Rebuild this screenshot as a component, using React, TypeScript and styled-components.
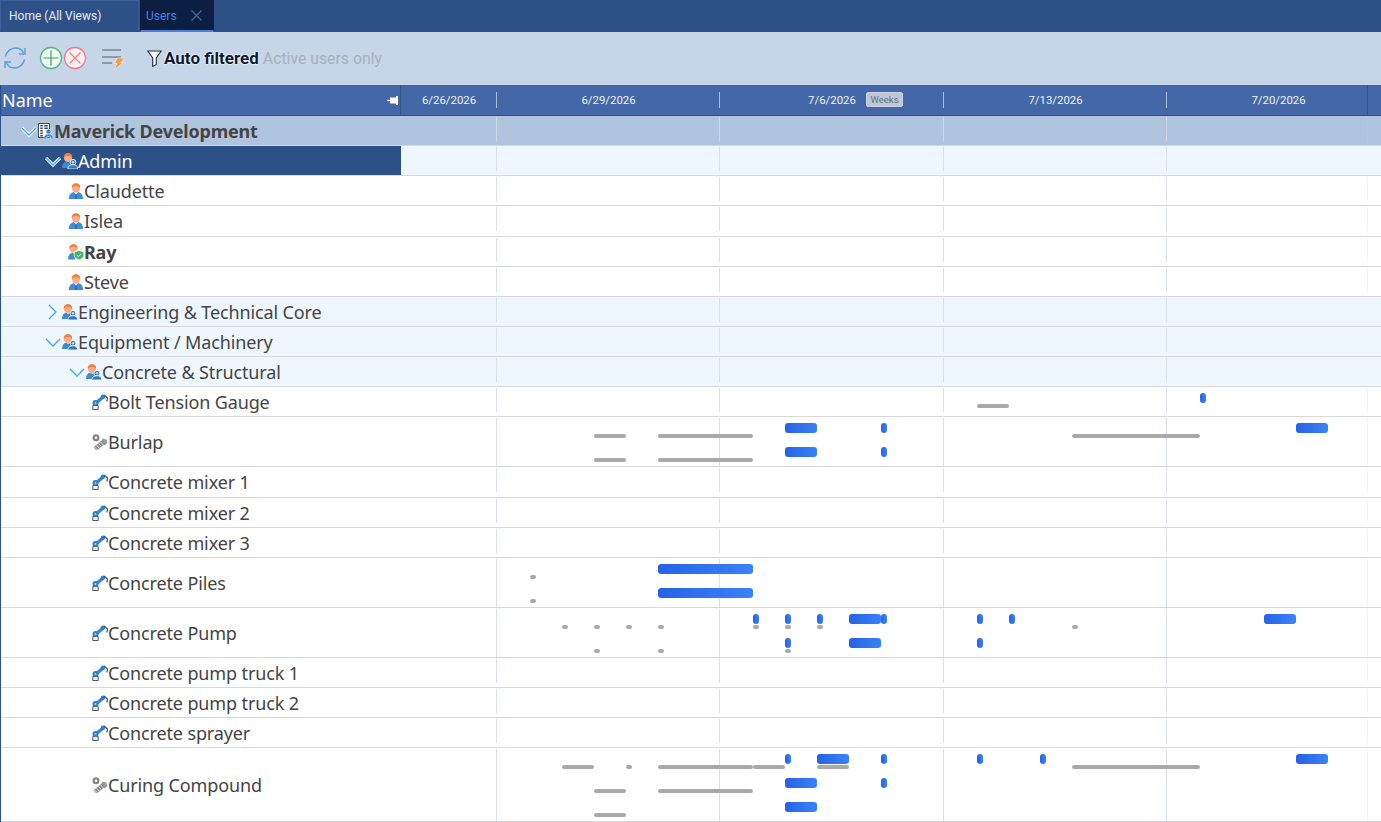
import React from 'react';
import styled, { createGlobalStyle } from 'styled-components';

const Global = createGlobalStyle`
  html, body { margin: 0; padding: 0; height: 100%; overflow: hidden; background: #fff; }
  #root { height: 100%; }
`;

const Page = styled.div`
  height: 822px; display: flex; flex-direction: column; overflow: hidden;
  font-family: "Noto Sans", "Open Sans", sans-serif; color: #444;
`;

/* ---------- tabs ---------- */
const TabBar = styled.div`
  height: 32px; flex: none; display: flex; gap: 1px; background: #2d5087; box-sizing: border-box;
`;
const Tab = styled.div<{ $active?: boolean }>`
  width: ${p => (p.$active ? '74px' : '139px')}; box-sizing: border-box; display: flex; align-items: center;
  padding-left: ${p => (p.$active ? '5px' : '8px')}; gap: 14px; font: 12px Roboto, sans-serif;
  background: ${p => (p.$active ? '#0c1f42' : '#2d5087')};
  color: ${p => (p.$active ? '#4b7fe6' : '#e6ecf5')};
  border: 1px solid ${p => (p.$active ? '#0c1f42' : '#3b5f98')};
  border-bottom: 2px solid ${p => (p.$active ? '#4d82dc' : '#2d5087')};
`;

/* ---------- toolbar ---------- */
const Toolbar = styled.div`
  height: 53px; flex: none; display: flex; align-items: center; background: #c6d5e8; padding-left: 3px;
  box-sizing: border-box; padding-bottom: 1px;
`;
const ToolIcon = styled.svg<{ $after?: number }>`
  width: 24px; height: 24px; flex: none; margin-right: ${p => p.$after ?? 0}px;
`;
const FilterBold = styled.span`
  font: 700 17px Roboto, sans-serif; color: #0c1a33; margin-left: 2px;
  text-shadow: 0 0 2px #fff, 0 0 2px #fff, 0 0 1px #fff;
`;
const FilterNote = styled.span`
  font: 15.8px Roboto, sans-serif; color: #a9b1bc; margin-left: 4px;
`;

/* ---------- header ---------- */
const Header = styled.div`
  height: 31px; flex: none; display: flex; background: #4467a7; border-bottom: 1px solid #2d5087;
  border-left: 1px solid #2d5087; box-sizing: border-box; color: #fff;
`;
const NameHead = styled.div`
  width: 400px; flex: none; box-sizing: border-box; border-right: 1px solid #34568f; display: flex;
  align-items: center; justify-content: space-between; padding: 0 1px 0 1px; font-size: 18px;
`;
const DateHead = styled.div<{ $w: number }>`
  width: ${p => p.$w}px; flex: none; position: relative; display: flex; align-items: center; justify-content: center;
  font: 11.4px Roboto, sans-serif; color: #eef2f8; box-sizing: border-box;
  &::after { content: ''; position: absolute; right: 0; top: 7px; bottom: 7px; width: 1px; background: #a9bcd8; }
`;
const LastHead = styled(DateHead)`
  padding-left: 22px;
  &::after { top: 0; bottom: 0; background: #34568f; }
`;
const WeeksBadge = styled.span`
  position: absolute; left: 146px; top: 7px; width: 37px; height: 15px; border-radius: 2px; background: #bcc8da;
  color: #667080; font: 9.5px Roboto, sans-serif; display: flex; align-items: center; justify-content: center;
  border: 1px solid #c8d2e0; box-sizing: border-box;
`;

/* ---------- rows ---------- */
const Body = styled.div`
  flex: 1; min-height: 0; overflow: hidden; border-left: 1px solid #2d5087;
`;
type Kind = 'org' | 'selected' | 'group' | 'leaf';
const Row = styled.div<{ $h: number; $kind: Kind }>`
  height: ${p => p.$h}px; box-sizing: border-box; display: flex; border-bottom: 1px solid #d8d8d8;
  background: ${p => (p.$kind === 'org' ? '#b0c4dd' : p.$kind === 'leaf' ? '#fff' : '#eef7ff')};
`;
const TreeCell = styled.div<{ $indent: number; $kind: Kind; $bold?: boolean }>`
  width: 400px; flex: none; box-sizing: border-box; display: flex; align-items: center;
  padding-left: ${p => p.$indent - 1}px; white-space: nowrap;
  font-size: 18px; letter-spacing: ${p => (p.$bold ? '-0.2px' : '-0.13px')}; line-height: 24px;
  font-weight: ${p => (p.$bold ? 700 : 400)};
  background: ${p => (p.$kind === 'selected' ? '#2d5087' : 'transparent')};
  color: ${p => (p.$kind === 'selected' ? '#fff' : '#444')};
`;
const Timeline = styled.div`
  flex: 1; position: relative; overflow: hidden;
`;
const GridLine = styled.i<{ $tall: boolean; $faint?: boolean }>`
  position: absolute; top: 1px; width: 1px;
  height: ${p => (p.$tall ? 'calc(100% - 1px)' : '24px')};
  background: ${p => (p.$faint ? '#f6f6f6' : '#d5e1ee')};
`;
const OrgGridLine = styled(GridLine)`
  background: ${p => (p.$faint ? '#b6c8df' : '#cbd9ea')};
`;
const Bar = styled.b<{ $gray: boolean }>`
  position: absolute;
  height: ${p => (p.$gray ? 4 : 10)}px;
  border-radius: ${p => (p.$gray ? 2 : 3)}px;
  background: ${p => (p.$gray ? '#a9a9a9' : 'linear-gradient(90deg, #2563e6, #3b82f6)')};
`;
const Chevron = styled.svg`
  width: 18px; height: 16px; flex: none; overflow: visible;
`;
const RowIcon = styled.svg`
  width: 16px; height: 16px; flex: none;
`;

/* ---------- icons ---------- */
const Person = () => (
  <RowIcon viewBox="0 0 16 16">
    <path d="M.8 16c0-3.800 2-6.200 4.700-7L8 11l2.500-2c2.700.8 4.700 3.200 4.700 7z" fill="#3f8cd6" />
    <path d="M5.800 8.800 8 11.500l2.200-2.700L8 9.600z" fill="#cfe4f6" />
    <path d="M7.300 11.500h1.400L9 16H7z" fill="#2a6cb0" />
    <ellipse cx="8" cy="5" rx="4" ry="4.500" fill="#f7ad86" />
    <path d="M3.900 5.500C3.300 2 5.400.3 8 .3s4.700 1.700 4.100 5.200c-.6-1.800-1.900-2.500-4.100-2.500s-3.500.7-4.100 2.500z" fill="#ec8240" />
  </RowIcon>
);
const Group = () => (
  <RowIcon viewBox="0 0 16 16">
    <path d="M0 15c0-3.500 1.600-5.800 4.200-6.500L6 10l2-1 1 6z" fill="#3f8cd6" />
    <ellipse cx="6" cy="4.700" rx="4.100" ry="4.400" fill="#f7ad86" />
    <path d="M1.900 5.200C1.300 1.800 3.400.2 6 .2s4.700 1.600 4.100 5c-.6-1.700-1.900-2.300-4.100-2.300S2.500 3.500 1.900 5.200z" fill="#ec8240" />
    <circle cx="11" cy="9.300" r="2.900" fill="#2f77bf" stroke="#fff" strokeWidth=".9" />
    <path d="M5.800 16c0-2.900 2.300-4.300 5.200-4.300s4.800 1.400 4.800 4.300z" fill="#2f77bf" stroke="#fff" strokeWidth=".8" />
    <circle cx="11" cy="9.300" r="1.300" fill="#bcdcf5" />
  </RowIcon>
);
const Admin = () => (
  <RowIcon viewBox="0 0 16 16">
    <path d="M0 15.500c0-3.500 1.600-6 4.200-6.700l3 1.200v5.500z" fill="#3f8cd6" />
    <ellipse cx="5.500" cy="4.500" rx="4" ry="4.300" fill="#f7ad86" />
    <path d="M1.500 5C.9 1.800 3 .2 5.500.2s4.600 1.600 4 4.800c-.6-1.700-1.800-2.200-4-2.200S2.100 3.300 1.500 5z" fill="#ec8240" />
    <path d="M11 6.300l4.800 1.600v3.500c0 2.200-2.200 3.700-4.800 4.600-2.600-.9-4.800-2.400-4.800-4.600V7.900z" fill="#3dbb6b" stroke="#fff" strokeWidth=".8" />
    <path d="M8.800 11l1.600 1.600L13.200 9.800" fill="none" stroke="#d8f5e2" strokeWidth="1" />
  </RowIcon>
);
const Org = () => (
  <RowIcon viewBox="0 0 16 16">
    <path d="M.5.500h11v14H.5z" fill="#fff" stroke="#3c4a5c" />
    <path d="M2.300 2.800h2.500M6.300 2.800h3.500M2.300 5.300h2.500M6.300 5.300h3.500M2.300 7.800h2.500M2.300 10.300h2.500M2.300 12.800h2.500" stroke="#3c4a5c" strokeWidth="1.400" />
    <circle cx="10.500" cy="8.700" r="2.600" fill="#3a86cf" stroke="#fff" strokeWidth=".7" />
    <path d="M5.800 16c0-3.200 1.800-5 4.700-5s4.900 1.800 4.900 5h-2.300l-.6-2.200H9l-.6 2.200z" fill="#3a86cf" stroke="#fff" strokeWidth=".5" />
  </RowIcon>
);
const Robot = () => (
  <RowIcon viewBox="0 0 16 16">
    <path d="M.8 11.500h5.400v4H.8z" fill="#f4f4f4" stroke="#4d5560" />
    <path d="M3.500 9.500l7.500-6.500" stroke="#3686d6" strokeWidth="3.400" />
    <circle cx="3.500" cy="9" r="3" fill="#2f7fd0" />
    <circle cx="3.500" cy="9" r="1" fill="#a9d3f3" />
    <circle cx="11" cy="2.800" r="2.200" fill="#2f7fd0" />
    <path d="M12 1l3.500 3-.6 3.500" stroke="#4d5560" strokeWidth="1.300" fill="none" />
  </RowIcon>
);
const Tool = () => (
  <RowIcon viewBox="0 0 16 16">
    <circle cx="4" cy="3.800" r="3.500" fill="#858585" />
    <circle cx="4" cy="3.800" r="1.300" fill="#fff" />
    <path d="M10.500 4.500l4 1 1 3.500-3 2.500-3.500-3z" fill="#9a9a9a" />
    <path d="M11.500 8 3 15" stroke="#8a8a8a" strokeWidth="4.600" />
    <path d="M8.500 7.800l2.600 3M6.500 9.400l2.600 3M4.500 11l2.600 3M2.500 12.700l2.600 3" stroke="#f3f3f3" strokeWidth=".9" />
  </RowIcon>
);
const Down = ({ glow }: { glow?: boolean }) => (
  <Chevron viewBox="0 0 18 16">
    {glow && <path d="M2 5l7 7 7-7" fill="none" stroke="#fff" strokeWidth="3.200" />}
    <path d="M2 5l7 7 7-7" fill="none" stroke="#3aa9ec" strokeWidth="1.300" />
  </Chevron>
);
const Right = () => (
  <Chevron viewBox="0 0 18 16">
    <path d="M5 1l7 7-7 7" fill="none" stroke="#3aa9ec" strokeWidth="1.300" />
  </Chevron>
);
const PinIcon = () => (
  <svg width="12" height="11" viewBox="0 0 12 11">
    <path d="M0 5.500h4" stroke="#fff" strokeWidth="1.300" />
    <path d="M3 2.500h6V1h2v9H9V8.500H3z" fill="#fff" />
  </svg>
);
const RefreshIcon = () => (
  <ToolIcon viewBox="0 0 24 24" $after={12}>
    <path d="M2.500 10.500C3.500 5.500 7.500 2 12.500 2c4 0 6.800 2 8.300 5.500M21.500 13.500c-1 5-5 8.500-10 8.500-4 0-6.800-2-8.300-5.500" fill="none" stroke="#5a9fd8" strokeWidth="1.400" />
    <path d="M22 2v6h-6M2 22v-6h6" fill="none" stroke="#5a9fd8" strokeWidth="1.400" />
  </ToolIcon>
);
const AddIcon = () => (
  <ToolIcon viewBox="0 0 24 24">
    <circle cx="12" cy="12" r="10.500" fill="#f2f8f4" stroke="#4cbb7a" strokeWidth="1.300" />
    <path d="M12 4.500v15M4.500 12h15" stroke="#2fa55f" strokeWidth="1.200" />
  </ToolIcon>
);
const RemoveIcon = () => (
  <ToolIcon viewBox="0 0 24 24" $after={14}>
    <circle cx="12" cy="12" r="10.500" fill="#fbf0f1" stroke="#ee7d83" strokeWidth="1.300" />
    <path d="M6.500 6.500l11 11M17.500 6.500l-11 11" stroke="#ee7d83" strokeWidth="1.200" />
  </ToolIcon>
);
const RulesIcon = () => (
  <ToolIcon viewBox="0 0 24 24" $after={22}>
    <path d="M1 4h19M1 11h19M1 17h10" stroke="#7f8690" strokeWidth="1.500" />
    <path d="M16.500 12h7L20 16.500h2.500L13 24l3-6.500h-3z" fill="#f0a04a" stroke="#fff" strokeWidth=".5" />
  </ToolIcon>
);
const FunnelIcon = () => (
  <svg width="15" height="17" viewBox="0 0 15 17" style={{ flex: 'none' }}>
    <path d="M.8 1h13.400L9.300 8v6.500l-3.600 2V8z" fill="#f4f7fb" stroke="#2a2f38" strokeWidth="1.100" />
  </svg>
);

/* ---------- data ---------- */
type B = [lane: number, gray: 0 | 1, x: number, x2: number];
type RowData = {
  name: string; h: number; kind: Kind; indent: number; icon: React.FC;
  arrow?: 'down' | 'right' | 'glow'; bold?: boolean; bars?: B[];
};
const blue = (lane: number, x: number, x2: number): B => [lane, 0, x, x2];
const gray = (lane: number, x: number, x2: number): B => [lane, 1, x, x2];

const rows: RowData[] = [
  { name: 'Maverick Development', h: 30, kind: 'org', indent: 20, icon: Org, arrow: 'glow', bold: true },
  { name: 'Admin', h: 30, kind: 'selected', indent: 44, icon: Group, arrow: 'glow' },
  { name: 'Claudette', h: 30, kind: 'leaf', indent: 68, icon: Person },
  { name: 'Islea', h: 31, kind: 'leaf', indent: 68, icon: Person },
  { name: 'Ray', h: 30, kind: 'leaf', indent: 68, icon: Admin, bold: true },
  { name: 'Steve', h: 30, kind: 'leaf', indent: 68, icon: Person },
  { name: 'Engineering & Technical Core', h: 30, kind: 'group', indent: 44, icon: Group, arrow: 'right' },
  { name: 'Equipment / Machinery', h: 30, kind: 'group', indent: 44, icon: Group, arrow: 'down' },
  { name: 'Concrete & Structural', h: 30, kind: 'group', indent: 68, icon: Group, arrow: 'down' },
  { name: 'Bolt Tension Gauge', h: 30, kind: 'leaf', indent: 92, icon: Robot, bars: [gray(0, 977, 1009), blue(0, 1200, 1206)] },
  {
    name: 'Burlap', h: 50, kind: 'leaf', indent: 92, icon: Tool,
    bars: [
      gray(0, 594, 626), gray(0, 658, 753), blue(0, 785, 817), blue(0, 881, 887), gray(0, 1072, 1200), blue(0, 1296, 1328),
      gray(1, 594, 626), gray(1, 658, 753), blue(1, 785, 817), blue(1, 881, 887),
    ],
  },
  { name: 'Concrete mixer 1', h: 31, kind: 'leaf', indent: 92, icon: Robot },
  { name: 'Concrete mixer 2', h: 30, kind: 'leaf', indent: 92, icon: Robot },
  { name: 'Concrete mixer 3', h: 30, kind: 'leaf', indent: 92, icon: Robot },
  {
    name: 'Concrete Piles', h: 50, kind: 'leaf', indent: 92, icon: Robot,
    bars: [gray(0, 530, 536), blue(0, 658, 753), gray(1, 530, 536), blue(1, 658, 753)],
  },
  {
    name: 'Concrete Pump', h: 50, kind: 'leaf', indent: 92, icon: Robot,
    bars: [
      gray(0, 562, 568), gray(0, 594, 600), gray(0, 626, 632), gray(0, 658, 664), gray(0, 753, 759), gray(0, 785, 791), gray(0, 817, 823),
      blue(0, 753, 759), blue(0, 785, 791), blue(0, 817, 823), blue(0, 849, 881), blue(0, 881, 887),
      blue(0, 977, 983), blue(0, 1009, 1015), gray(0, 1072, 1078), blue(0, 1264, 1296),
      gray(1, 594, 600), gray(1, 658, 664), gray(1, 785, 791), blue(1, 785, 791), blue(1, 849, 881), blue(1, 977, 983),
    ],
  },
  { name: 'Concrete pump truck 1', h: 30, kind: 'leaf', indent: 92, icon: Robot },
  { name: 'Concrete pump truck 2', h: 30, kind: 'leaf', indent: 92, icon: Robot },
  { name: 'Concrete sprayer', h: 30, kind: 'leaf', indent: 92, icon: Robot },
  {
    name: 'Curing Compound', h: 74, kind: 'leaf', indent: 92, icon: Tool,
    bars: [
      gray(0, 562, 594), gray(0, 626, 632), gray(0, 658, 753), gray(0, 753, 785), gray(0, 817, 849),
      blue(0, 785, 791), blue(0, 817, 849), blue(0, 881, 887), blue(0, 977, 983), blue(0, 1040, 1046), gray(0, 1072, 1200), blue(0, 1296, 1328),
      gray(1, 594, 626), gray(1, 658, 753), blue(1, 785, 817), blue(1, 881, 887),
      gray(2, 594, 626), blue(2, 785, 817),
    ],
  },
];

const TL_LEFT = 401;
const lines = [496, 719, 943, 1166];

export default function App() {
  return (
    <Page>
      <Global />
      <TabBar>
        <Tab>Home (All Views)</Tab>
        <Tab $active>
          Users
          <svg width="11" height="11" viewBox="0 0 11 11">
            <path d="M.5.500l10 10M10.500.500l-10 10" stroke="#3f66a8" strokeWidth="1.300" />
          </svg>
        </Tab>
      </TabBar>
      <Toolbar>
        <RefreshIcon />
        <AddIcon />
        <RemoveIcon />
        <RulesIcon />
        <FunnelIcon />
        <FilterBold>Auto filtered</FilterBold>
        <FilterNote>Active users only</FilterNote>
      </Toolbar>
      <Header>
        <NameHead>
          Name
          <PinIcon />
        </NameHead>
        <DateHead $w={96}>6/26/2026</DateHead>
        <DateHead $w={223}>6/29/2026</DateHead>
        <DateHead $w={224}>
          7/6/2026
          <WeeksBadge>Weeks</WeeksBadge>
        </DateHead>
        <DateHead $w={223}>7/13/2026</DateHead>
        <LastHead $w={201}>7/20/2026</LastHead>
      </Header>
      <Body>
        {rows.map(r => {
          const Icon = r.icon;
          const Line = r.kind === 'org' ? OrgGridLine : GridLine;
          return (
            <Row key={r.name} $h={r.h} $kind={r.kind}>
              <TreeCell $indent={r.indent} $kind={r.kind} $bold={r.bold}>
                {r.arrow === 'down' && <Down />}
                {r.arrow === 'glow' && <Down glow />}
                {r.arrow === 'right' && <Right />}
                <Icon />
                {r.name}
              </TreeCell>
              <Timeline>
                {lines.map(x => (
                  <Line key={x} $tall={r.h > 31} style={{ left: x - TL_LEFT }} />
                ))}
                <Line $tall={r.h > 31} $faint style={{ left: 1367 - TL_LEFT }} />
                {r.bars?.map((b, i) => (
                  <Bar
                    key={i}
                    $gray={b[1] === 1}
                    style={{ left: b[2] - TL_LEFT, width: b[3] - b[2], top: (b[1] === 1 ? 17 : 6) + b[0] * 24 }}
                  />
                ))}
              </Timeline>
            </Row>
          );
        })}
      </Body>
    </Page>
  );
}
